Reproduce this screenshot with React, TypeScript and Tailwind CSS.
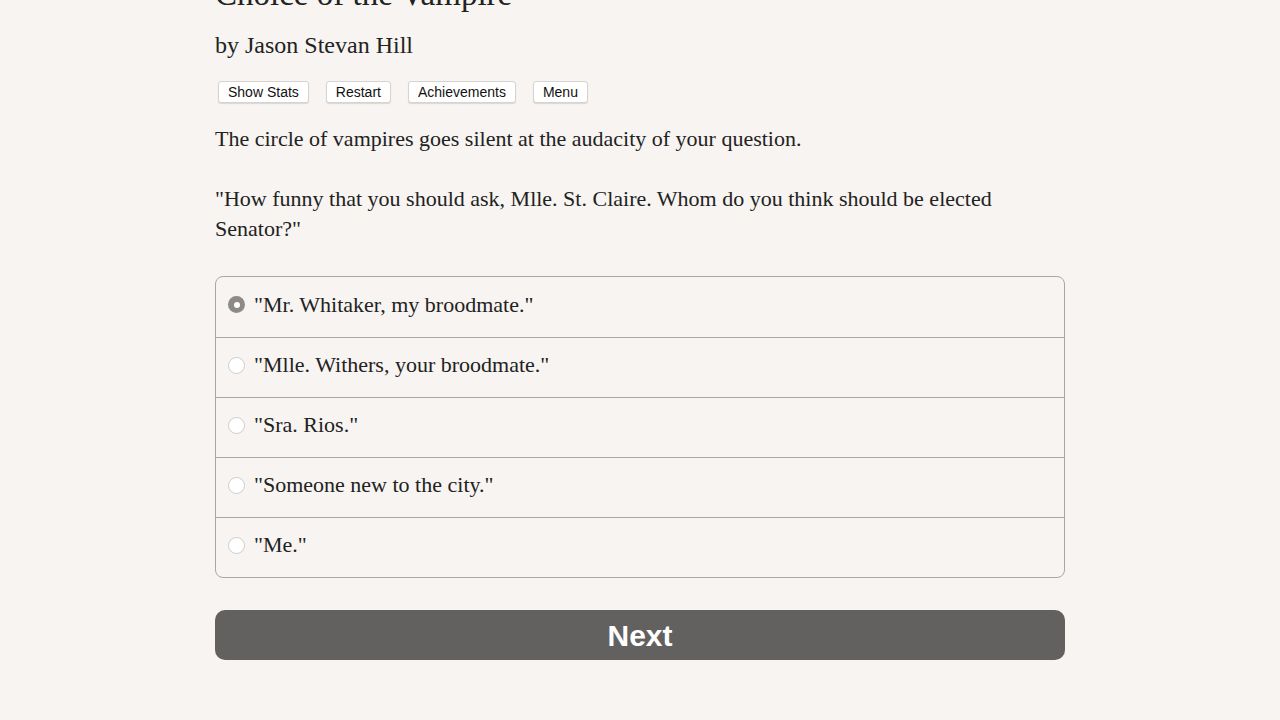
import React from "react";

const options = [
  '"Mr. Whitaker, my broodmate."',
  '"Mlle. Withers, your broodmate."',
  '"Sra. Rios."',
  '"Someone new to the city."',
  '"Me."',
];

export default function App() {
  return (
    <div className="min-h-[720px] w-full bg-[#f7f4f1] text-[#222] overflow-hidden" style={{ fontFamily: '"Liberation Serif", serif' }}>
      <div className="mx-auto w-[850px]">
        <h1 className="text-[33px] leading-[44px] mt-[-28px] text-[#222]">Choice of the Vampire</h1>
        <div className="text-[24px] leading-[30px] mt-[14px]">by Jason Stevan Hill</div>
        <div className="flex gap-[17px] mt-[21px] ml-[3px]" style={{ fontFamily: '"Liberation Sans", sans-serif' }}>
          {["Show Stats", "Restart", "Achievements", "Menu"].map((b) => (
            <button key={b} className="h-[22px] px-[9px] text-[14px] leading-[20px] bg-white border border-[#d6d3d0] rounded-[3px] shadow-[0_1px_1px_rgba(0,0,0,0.12)] text-[#111]">
              {b}
            </button>
          ))}
        </div>
        <p className="text-[22px] leading-[30px] mt-[21px]">The circle of vampires goes silent at the audacity of your question.</p>
        <p className="text-[22px] leading-[30px] mt-[30px] pr-[40px]">"How funny that you should ask, Mlle. St. Claire. Whom do you think should be elected Senator?"</p>
        <div className="mt-[32px] border border-[#a9a7a5] rounded-[8px] overflow-hidden">
          {options.map((o, i) => (
            <div key={o} className={`h-[60px] flex items-center pl-[12px] pb-[5px] ${i > 0 ? "border-t border-[#a9a7a5]" : ""}`}>
              {i === 0 ? (
                <span className="w-[17px] h-[17px] rounded-full bg-[#8c8b8a] flex items-center justify-center">
                  <span className="w-[6px] h-[6px] rounded-full bg-white" />
                </span>
              ) : (
                <span className="w-[17px] h-[17px] rounded-full bg-white border border-[#cfcdcb]" />
              )}
              <span className="ml-[9px] text-[22px] leading-[30px]">{o}</span>
            </div>
          ))}
        </div>
        <button className="mt-[32px] w-full h-[50px] rounded-[10px] bg-[#63615f] text-white text-[30px] font-bold" style={{ fontFamily: '"Liberation Sans", sans-serif' }}>
          Next
        </button>
      </div>
    </div>
  );
}
